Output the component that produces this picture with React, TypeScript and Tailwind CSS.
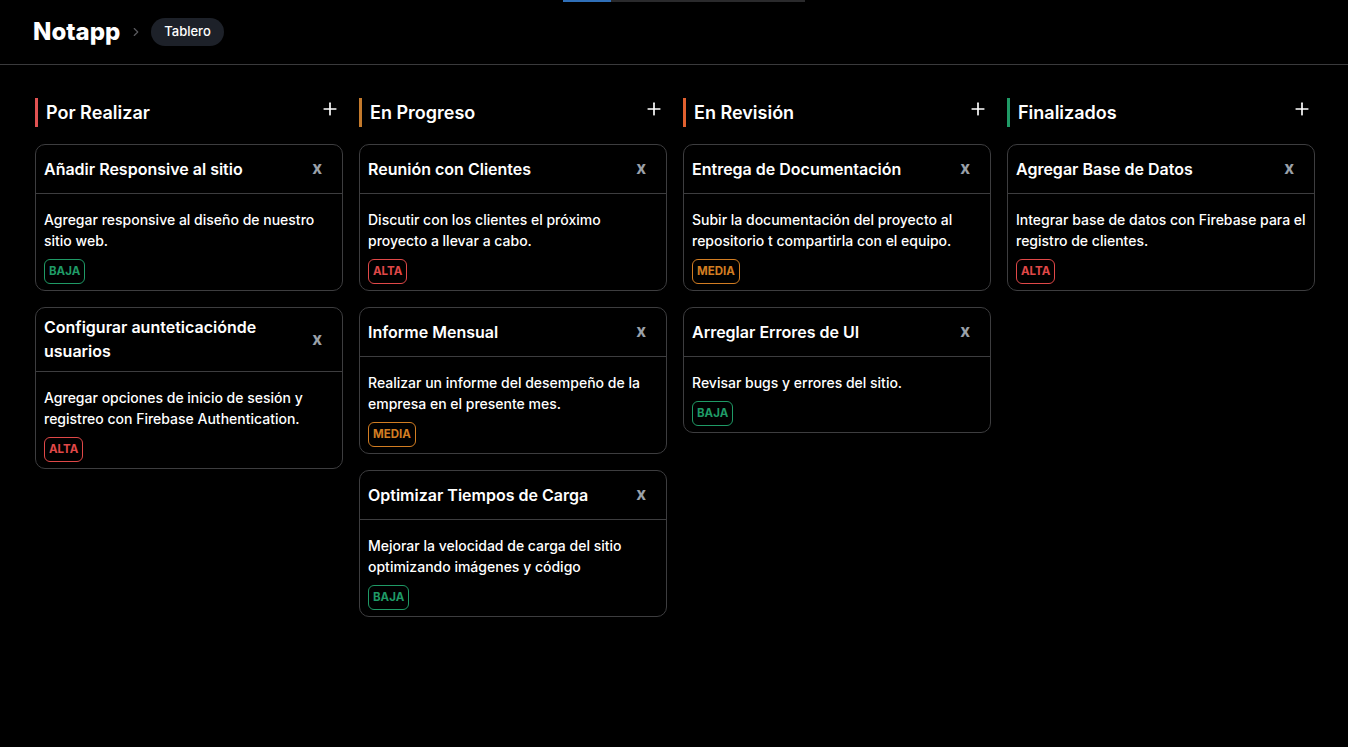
import { Plus, ChevronRight } from "lucide-react";

type Priority = "BAJA" | "MEDIA" | "ALTA";

interface Task {
  title: string;
  description: string;
  priority: Priority;
}

interface Column {
  name: string;
  barColor: string;
  tasks: Task[];
}

const priorityStyles: Record<Priority, string> = {
  BAJA: "text-[#1f9a66] border-[#1f9a66]",
  MEDIA: "text-[#d27d22] border-[#d27d22]",
  ALTA: "text-[#e04848] border-[#e04848]",
};

const columns: Column[] = [
  {
    name: "Por Realizar",
    barColor: "bg-[#e05252]",
    tasks: [
      {
        title: "Añadir Responsive al sitio",
        description: "Agregar responsive al diseño de nuestro sitio web.",
        priority: "BAJA",
      },
      {
        title: "Configurar aunteticaciónde usuarios",
        description: "Agregar opciones de inicio de sesión y registreo con Firebase Authentication.",
        priority: "ALTA",
      },
    ],
  },
  {
    name: "En Progreso",
    barColor: "bg-[#c47a2c]",
    tasks: [
      {
        title: "Reunión con Clientes",
        description: "Discutir con los clientes el próximo proyecto a llevar a cabo.",
        priority: "ALTA",
      },
      {
        title: "Informe Mensual",
        description: "Realizar un informe del desempeño de la empresa en el presente mes.",
        priority: "MEDIA",
      },
      {
        title: "Optimizar Tiempos de Carga",
        description: "Mejorar la velocidad de carga del sitio optimizando imágenes y código",
        priority: "BAJA",
      },
    ],
  },
  {
    name: "En Revisión",
    barColor: "bg-[#e0602f]",
    tasks: [
      {
        title: "Entrega de Documentación",
        description: "Subir la documentación del proyecto al repositorio t compartirla con el equipo.",
        priority: "MEDIA",
      },
      {
        title: "Arreglar Errores de UI",
        description: "Revisar bugs y errores del sitio.",
        priority: "BAJA",
      },
    ],
  },
  {
    name: "Finalizados",
    barColor: "bg-[#1f9a66]",
    tasks: [
      {
        title: "Agregar Base de Datos",
        description: "Integrar base de datos con Firebase para el registro de clientes.",
        priority: "ALTA",
      },
    ],
  },
];

function TaskCard({ task }: { task: Task }) {
  return (
    <div className="rounded-[10px] border border-[#3d3d3f] bg-black">
      <div className="flex min-h-[49px] items-center justify-between border-b border-[#3d3d3f] pb-[8px] pl-2 pr-5 pt-[7px]">
        <h3 className="w-[240px] text-[16px] font-semibold leading-6 text-white">{task.title}</h3>
        <button className="text-[17px] font-bold leading-none text-[#9aa0a8]">x</button>
      </div>
      <div className="px-2 pb-[6px] pt-[15px]">
        <p className="text-[14px] font-medium leading-[21px] text-white">{task.description}</p>
        <span
          className={`mt-[8px] inline-flex h-[25px] items-center rounded-md border px-[4px] text-[11.5px] font-bold ${priorityStyles[task.priority]}`}
        >
          {task.priority}
        </span>
      </div>
    </div>
  );
}

function BoardColumn({ column }: { column: Column }) {
  return (
    <div className="flex w-[308px] flex-col">
      <div className="mb-[17px] flex h-[29px] items-center justify-between">
        <div className="flex h-full items-center gap-[8px]">
          <span className={`h-full w-[3px] ${column.barColor}`} />
          <h2 className="text-[18px] font-semibold text-white">{column.name}</h2>
        </div>
        <Plus className="mb-[7px] mr-[3px] h-[20px] w-[20px] text-white" strokeWidth={2} />
      </div>
      <div className="flex flex-col gap-[16px]">
        {column.tasks.map((t) => (
          <TaskCard key={t.title} task={t} />
        ))}
      </div>
    </div>
  );
}

export default function App() {
  return (
    <div
      className="relative min-h-[747px] bg-black text-white"
      style={{ fontFamily: "Inter, 'Noto Sans', sans-serif" }}
    >
      <div className="absolute left-[563px] top-0 flex h-[2px] w-[242px] bg-[#2a2a2c]">
        <div className="h-full w-[48px] bg-[#2f6fb8]" />
      </div>
      <header className="flex h-[65px] items-center border-b border-[#3a3a3c] pl-[33px]">
        <h1 className="text-[24px] font-extrabold text-white">Notapp</h1>
        <ChevronRight className="ml-[9px] h-[14px] w-[14px] text-[#5a5a5e]" strokeWidth={2} />
        <span className="ml-[8px] rounded-full bg-[#1d2129] px-[13px] py-[4px] text-[13px] font-medium text-white">
          Tablero
        </span>
      </header>
      <main className="flex gap-[16px] pl-[35px] pt-[33px]">
        {columns.map((c) => (
          <BoardColumn key={c.name} column={c} />
        ))}
      </main>
    </div>
  );
}
